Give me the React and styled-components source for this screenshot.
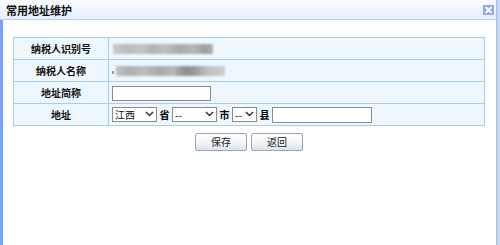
import React from "react";
import styled, { createGlobalStyle } from "styled-components";

const Global = createGlobalStyle`
  html, body {
    margin: 0;
    padding: 0;
    background: #fff;
    font-family: "Noto Sans CJK SC", "Liberation Sans", sans-serif;
    font-size: 12px;
    color: #000;
  }
`;

const Frame = styled.div`
  width: 500px;
  height: 245px;
  display: flex;
  overflow: hidden;
`;

const Main = styled.div`
  flex: 1;
  display: flex;
  flex-direction: column;
`;

const RightEdge = styled.div`
  width: 4px;
  background: #c4d3f6;
  border-left: 1px solid #a9bdee;
`;

const TitleBar = styled.div`
  height: 20px;
  box-sizing: border-box;
  display: flex;
  align-items: center;
  justify-content: space-between;
  padding: 0 2px 0 6px;
  background: linear-gradient(#fbfcff, #e6edfc);
  border-bottom: 1px solid #bccdf2;
`;

const Title = styled.div`
  font-size: 11px;
  font-weight: bold;
  line-height: 14px;
  color: #111;
`;

const Close = styled.div`
  width: 11px;
  height: 10px;
  background: #8eaaee;
  display: flex;
  align-items: center;
  justify-content: center;
  margin-top: 1px;
`;

const Content = styled.div`
  flex: 1;
  border-left: 3px solid #7ea1f1;
  padding: 17px 11px 0 10px;
`;

const Table = styled.table`
  width: 472px;
  border-collapse: collapse;
  background: #eef6fe;
  border: 1px solid #a9cde8;
`;

const Row = styled.tr`
  height: 22px;
`;

const Label = styled.td`
  width: 94px;
  padding: 0;
  text-align: center;
  font-weight: bold;
  font-size: 10px;
  border: 1px solid #a9cde8;
  border-left: none;
  color: #111;
`;

const Value = styled.td`
  padding: 0 0 0 3px;
  border: 1px solid #a9cde8;
  border-right: none;
  vertical-align: middle;
`;

const Inline = styled.div`
  display: flex;
  align-items: center;
  gap: 2px;
`;

const Blur = styled.div`
  height: 10px;
  width: ${(p) => p.$w}px;
  margin-left: ${(p) => p.$ml || 0}px;
  filter: blur(0.9px);
  border-radius: 1px;
  background: linear-gradient(90deg, ${(p) => p.$stops});
`;

const Tick = styled.div`
  width: 2px;
  height: 3px;
  background: #999;
  align-self: flex-start;
  margin-top: 5px;
`;

const TextInput = styled.input`
  box-sizing: border-box;
  width: ${(p) => p.$w}px;
  height: ${(p) => p.$h || 15}px;
  border: 1px solid #8c8c8c;
  background: #fff;
  padding: 0 2px;
  font-size: 12px;
  outline: none;
`;

const SelectWrap = styled.span`
  position: relative;
  display: inline-block;
  height: 15px;
`;

const SelectBox = styled.select`
  appearance: none;
  -webkit-appearance: none;
  box-sizing: border-box;
  display: block;
  width: ${(p) => p.$w}px;
  height: 15px;
  border: 1px solid #8c8c8c;
  border-radius: 0;
  background: #fff;
  padding: 0 0 0 2px;
  font-family: "Noto Sans CJK SC", sans-serif;
  font-size: 10px;
  line-height: 13px;
  color: #111;
  outline: none;
`;

const Chevron = styled.svg`
  position: absolute;
  right: 3px;
  top: 4px;
  pointer-events: none;
`;

const Unit = styled.span`
  font-weight: bold;
  font-size: 10px;
  padding: 0 0.5px;
`;

const Buttons = styled.div`
  display: flex;
  justify-content: center;
  gap: 4px;
  margin-top: 7px;
`;

const Button = styled.button`
  width: 52px;
  height: 18px;
  box-sizing: border-box;
  border: 1px solid #9aa6b6;
  border-radius: 2px;
  background: linear-gradient(#ffffff, #f4f6f8 50%, #dde3ea);
  font-family: "Noto Sans CJK SC", sans-serif;
  font-size: 10px;
  line-height: 14px;
  padding: 0;
  color: #222;
`;

function Select({ width, value }) {
  return (
    <SelectWrap>
      <SelectBox $w={width} defaultValue={value}>
        <option value={value}>{value}</option>
      </SelectBox>
      <Chevron width="9" height="6" viewBox="0 0 9 6">
        <path d="M1 1 L4.5 4.5 L8 1" fill="none" stroke="#333" strokeWidth="1.5" />
      </Chevron>
    </SelectWrap>
  );
}

const idStops =
  "#c9c9c9 0%, #bcbcbc 15%, #c4c4c4 28%, #b2b2b2 40%, #c0c0c0 52%, #a9a9a9 66%, #b6b6b6 80%, #9e9e9e 92%, #b0b0b0 100%";
const nameStops =
  "#c2c2c2 0%, #b0b0b0 12%, #bdbdbd 26%, #a8a8a8 40%, #b9b9b9 52%, #8e8e8e 64%, #999 72%, #c0c0c0 84%, #cfcfcf 100%";

export default function App() {
  return (
    <>
      <Global />
      <Frame>
        <Main>
          <TitleBar>
            <Title>常用地址维护</Title>
            <Close>
              <svg width="9" height="8" viewBox="0 0 9 8">
                <path d="M1.5 1 L7.5 7 M7.5 1 L1.5 7" stroke="#fff" strokeWidth="1.8" />
              </svg>
            </Close>
          </TitleBar>
          <Content>
            <Table>
              <tbody>
                <Row>
                  <Label>纳税人识别号</Label>
                  <Value>
                    <Inline>
                      <Blur $w={100} $ml={1} $stops={idStops} />
                    </Inline>
                  </Value>
                </Row>
                <Row>
                  <Label>纳税人名称</Label>
                  <Value>
                    <Inline>
                      <Tick />
                      <Blur $w={109} $stops={nameStops} />
                    </Inline>
                  </Value>
                </Row>
                <Row>
                  <Label>地址简称</Label>
                  <Value>
                    <TextInput $w={99} />
                  </Value>
                </Row>
                <Row>
                  <Label>地址</Label>
                  <Value>
                    <Inline>
                      <Select width={45} value="江西" />
                      <Unit>省</Unit>
                      <Select width={45} value="--" />
                      <Unit>市</Unit>
                      <Select width={25} value="--" />
                      <Unit>县</Unit>
                      <TextInput $w={100} $h={16} />
                    </Inline>
                  </Value>
                </Row>
              </tbody>
            </Table>
            <Buttons>
              <Button>保存</Button>
              <Button>返回</Button>
            </Buttons>
          </Content>
        </Main>
        <RightEdge />
      </Frame>
    </>
  );
}
